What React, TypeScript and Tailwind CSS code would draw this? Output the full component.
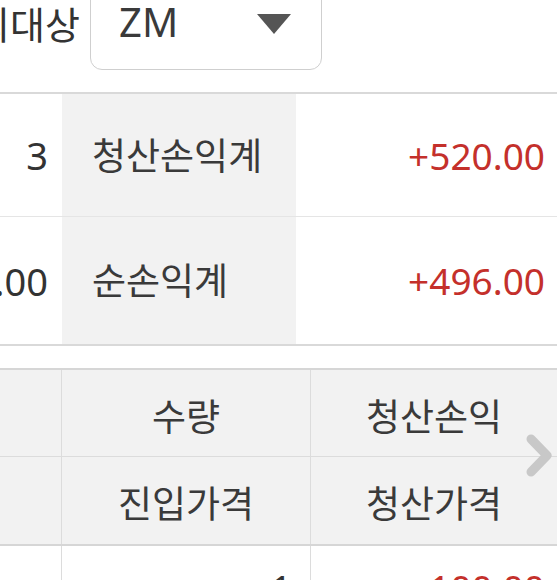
import React from 'react'

const FONT = { fontFamily: '"Noto Sans", "Noto Sans CJK KR", sans-serif' }

const SUMMARY = [
  { left: '3', label: '청산손익계', value: '+520.00', h: 'h-[123px]' },
  { left: '24.00', label: '순손익계', value: '+496.00', h: 'h-[127px]' },
]

export default function App() {
  return (
    <div className="w-[557px] h-[583px] overflow-hidden bg-white" style={FONT}>
      <div className="h-[580px] overflow-hidden text-[#333]">
        {/* target selector */}
        <header className="h-[92px] flex items-start">
          <div className="w-[80px] h-[48px] flex justify-end items-center overflow-hidden">
            <span className="shrink-0 whitespace-nowrap text-[38px] leading-none text-[#333]">조회대상</span>
          </div>
          <div className="ml-[10px] -mt-[20px] w-[232px] h-[90px] rounded-[12px] border border-[#cfcfcf] flex items-end justify-between pl-[28px] pr-[30px] pb-[27px]">
            <span className="text-[40px] leading-none text-[#3a3a3a]">ZM</span>
            <svg width="34" height="20" viewBox="0 0 34 20" className="mb-[8px]">
              <path d="M0 0 H34 L17 20 Z" fill="#555" />
            </svg>
          </div>
        </header>

        {/* summary */}
        <section className="border-t-2 border-b-2 border-[#d9d9d9]">
          {SUMMARY.map((r, i) => (
            <div
              key={r.label}
              className={`grid grid-cols-[62px_234px_1fr] ${r.h} ${i === 0 ? 'border-b border-[#e5e5e5]' : ''}`}
            >
              <div className="flex justify-end items-center overflow-hidden pr-[14px]">
                <span className="shrink-0 text-[38px] leading-none">{r.left}</span>
              </div>
              <div className="bg-[#f2f2f2] flex items-center pl-[30px]">
                <span className="text-[37px] leading-none text-[#3a3a3a]">{r.label}</span>
              </div>
              <div className="flex items-center justify-end pr-[12px]">
                <span className="text-[37px] leading-none text-[#c4302b]">{r.value}</span>
              </div>
            </div>
          ))}
        </section>

        {/* detail table */}
        <section className="mt-[22px] relative">
          <div className="border-t-2 border-b-2 border-[#d6d6d6] bg-[#f2f2f2]">
            <div className="grid grid-cols-[61px_249px_1fr] h-[87px] border-b border-[#dcdcdc]">
              <div />
              <div className="border-l border-[#dcdcdc] flex items-center justify-center pt-[6px]">
                <span className="text-[37px] leading-none text-[#3a3a3a]">수량</span>
              </div>
              <div className="border-l border-[#dcdcdc] flex items-center justify-center pt-[6px]">
                <span className="text-[37px] leading-none text-[#3a3a3a]">청산손익</span>
              </div>
            </div>
            <div className="grid grid-cols-[61px_249px_1fr] h-[87px]">
              <div />
              <div className="border-l border-[#dcdcdc] flex items-center justify-center pt-[6px]">
                <span className="text-[37px] leading-none text-[#3a3a3a]">진입가격</span>
              </div>
              <div className="border-l border-[#dcdcdc] flex items-center justify-center pt-[6px]">
                <span className="text-[37px] leading-none text-[#3a3a3a]">청산가격</span>
              </div>
            </div>
          </div>
          <div className="grid grid-cols-[61px_249px_1fr] h-[88px]">
            <div />
            <div className="border-l border-[#dcdcdc] flex items-start justify-end pr-[18px] pt-[23px]">
              <span className="text-[37px] leading-none">1</span>
            </div>
            <div className="border-l border-[#dcdcdc] flex items-start justify-end pr-[12px] pt-[23px]">
              <span className="text-[37px] leading-none text-[#c4302b]">+100.00</span>
            </div>
          </div>

          <svg width="27" height="43" viewBox="0 0 27 43" className="absolute top-[66px] right-[4px]">
            <path d="M5 5 L21 21.5 L5 38" fill="none" stroke="#c8c8c8" strokeWidth="9" strokeLinecap="round" strokeLinejoin="round" />
          </svg>
        </section>
      </div>
    </div>
  )
}
